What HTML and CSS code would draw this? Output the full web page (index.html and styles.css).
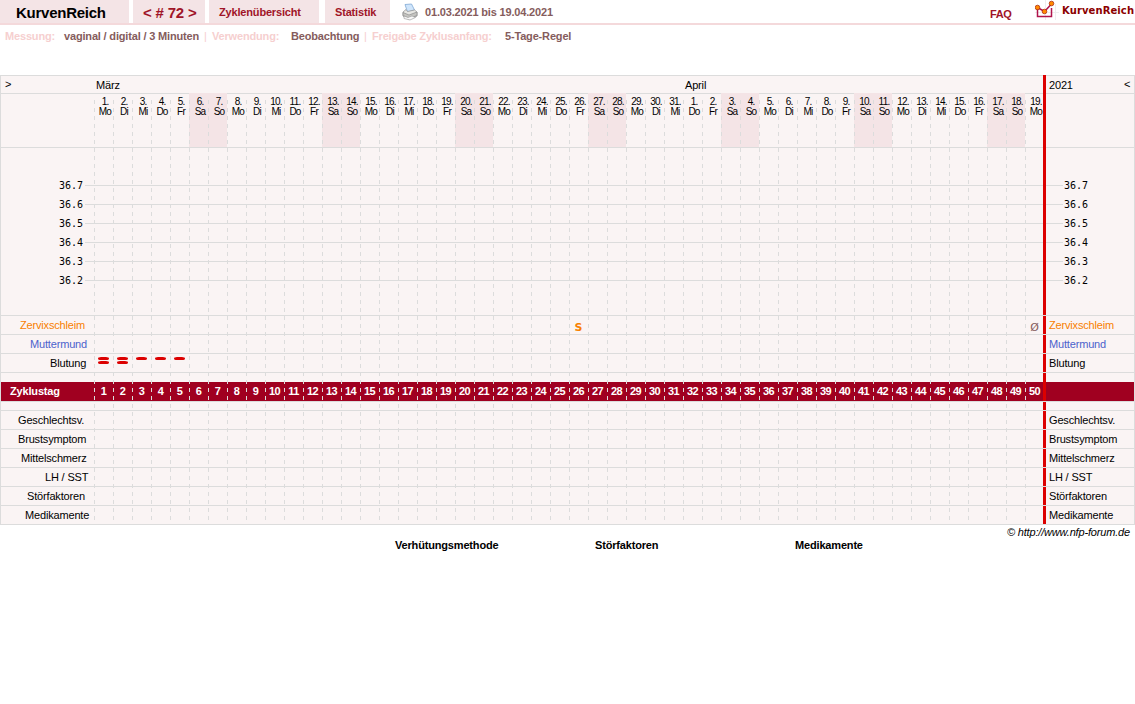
FILE: index.html
```
<!DOCTYPE html>
<html lang="de">
<head>
  <meta charset="UTF-8">
  <title>KurvenReich - Zyklus 72</title>
  <link rel="stylesheet" href="styles.css">
</head>
<body>

  <header class="topbar">
    <div class="tab brand">KurvenReich</div>
    <div class="tab nummer">&lt; # 72 &gt;</div>
    <div class="tab uebersicht">Zyklenübersicht</div>
    <div class="tab statistik">Statistik</div>
    <svg class="drucker" width="16" height="18" viewBox="0 0 16 18">
      <path d="M3 1.500 L9.500 1 L12.500 7 L5.500 9 Z" fill="#cfe5fb" stroke="#7fa8d4" stroke-width="0.8"/>
      <path d="M1 9 L4 6.500 L5.500 8.500 L12.500 7 L15 9 L15 13 L7 16.500 L1 13 Z" fill="#e6e6e2" stroke="#999" stroke-width="0.8"/>
      <path d="M1 9.500 L7 12 L15 9 L15 12.500 L7 15.500 L1 12.500 Z" fill="#c4c4c0" stroke="#8c8c8c" stroke-width="0.7"/>
      <path d="M2 13 L6 14.500 L10 13 L13.500 14.500 L8 17 L2 15.500 Z" fill="#f8f8f8" stroke="#999" stroke-width="0.6"/>
    </svg>
    <div class="zeitraum">01.03.2021 bis 19.04.2021</div>
    <div class="faq">FAQ</div>
    <svg class="logo" width="24" height="20" viewBox="0 0 24 20">
      <path d="M0 12.500 H24 M10.500 0 V20 M20.500 4 V20" stroke="#eee" fill="none"/>
      <path d="M2.500 8 V16.500 H16.500 V8" stroke="#b0144c" stroke-width="1.500" fill="none"/>
      <path d="M2.500 7.500 L9.500 11.500 L16.500 4" stroke="#b0144c" stroke-width="1.500" fill="none"/>
      <g fill="#ff8a00" stroke="#b03010" stroke-width="0.8">
        <circle cx="2.500" cy="7.500" r="2.300"/>
        <circle cx="9.500" cy="11.500" r="2.300"/>
        <circle cx="16.500" cy="3.500" r="2.300"/>
      </g>
    </svg>
    <div class="logo-text">KurvenReich</div>
  </header>

  <div class="infos">
    <span class="info-name messung">Messung:</span>
    <span class="info-wert w-messung">vaginal / digital / 3 Minuten</span>
    <span class="info-name trenner">|</span>
    <span class="info-name verwendung">Verwendung:</span>
    <span class="info-wert w-verwendung">Beobachtung</span>
    <span class="info-name trenner">|</span>
    <span class="info-name freigabe">Freigabe Zyklusanfang:</span>
    <span class="info-wert">5-Tage-Regel</span>
  </div>

  <main class="kurve">
    <div class="zeile monate">
      <span class="weiter">&gt;</span>
      <span class="monat maerz">März</span>
      <span class="monat april">April</span>
      <span class="jahr">2021</span>
      <span class="zurueck">&lt;</span>
    </div>
    <div class="zeile tage" id="tage"></div>
    <div class="zeile temperatur" id="temperatur"></div>
    <div id="oben"></div>
    <div class="zeile luecke"></div>
    <div class="zeile zyklustag" id="zyklustag"><span class="name">Zyklustag</span></div>
    <div class="zeile luecke klein"></div>
    <div id="unten"></div>
    <div class="raster"></div>
  </main>

  <div class="copyright">© http://www.nfp-forum.de</div>

  <div class="legende">
    <div>Verhütungsmethode</div>
    <div>Störfaktoren</div>
    <div>Medikamente</div>
  </div>

  <script src="kurve.js"></script>
</body>
</html>
```
FILE: styles.css
```
body {
  margin: 0;
  width: 1135px;
  min-height: 704px;
  font-family: "Liberation Sans", Arial, sans-serif;
  font-size: 11px;
  letter-spacing: -0.17px;
  color: #000;
  background-color: #fff;
}

.topbar {
  display: flex;
  height: 23px;
  border-bottom: 2px solid #f4d9db;
  font-weight: bold;
  line-height: 25px;
  white-space: nowrap;
  color: #a01428;
}

.tab {
  background-color: #f4e4e6;
  box-sizing: border-box;
  height: 23px;
}

.brand {
  width: 129px;
  margin-right: 4px;
  padding-left: 16px;
  font-size: 15px;
  letter-spacing: -0.25px;
  color: #000;
}

.nummer {
  width: 72px;
  margin-right: 4px;
  padding-left: 10px;
  font-size: 15px;
  letter-spacing: -0.2px;
}

.uebersicht {
  width: 110px;
  margin-right: 6px;
  padding-left: 10px;
}

.statistik {
  width: 65px;
  padding-left: 10px;
}

.drucker {
  margin: 3px 7px 0 12px;
}

.zeitraum {
  width: 565px;
  color: #855c5c;
}

.faq {
  width: 45px;
  line-height: 29px;
  letter-spacing: -0.4px;
}

.logo {
  flex: none;
}

.logo-text {
  padding-left: 3px;
  line-height: 22px;
  font-family: "DejaVu Sans", sans-serif;
  font-size: 10px;
  letter-spacing: 0.1px;
  color: #8b0000;
}

.infos {
  display: flex;
  height: 50px;
  padding-left: 5px;
  line-height: 23px;
  font-weight: bold;
  white-space: nowrap;
}

.info-name {
  color: #f6cfcf;
}

.info-wert {
  color: #855c5c;
}

.messung {
  width: 59px;
}

.w-messung {
  width: 140px;
}

.trenner {
  width: 8px;
  font-weight: normal;
}

.verwendung {
  width: 79px;
}

.w-verwendung {
  width: 73px;
}

.freigabe {
  width: 133px;
}

/* Kurvenblatt */

.kurve {
  position: relative;
  box-sizing: border-box;
  width: 1135px;
  height: 450px;
  border: 1px solid #dcdcdc;
  border-top: none;
  background-color: #faf4f4;
  white-space: nowrap;
}

.zeile {
  position: relative;
  display: flex;
  box-sizing: border-box;
  height: 19px;
  border-top: 1px solid #dcdcdc;
  line-height: 19px;
}

/* rote Linie am Zyklusende */
.zeile::after {
  content: "";
  position: absolute;
  z-index: 2;
  left: 1042px;
  top: 0;
  bottom: 0;
  width: 3px;
  background-color: #dc0000;
}

.monate::after,
.tage::after,
.temperatur::after {
  top: -1px;
}

.monate {
  height: 18px;
}

.weiter {
  width: 91px;
  padding-left: 4px;
  line-height: 16px;
}

.maerz {
  width: 589px;
}

.april {
  width: 364px;
}

.jahr {
  width: 75px;
}

.zurueck {
  line-height: 16px;
}

.tage {
  height: 54px;
  padding-left: 93px;
}

.tag {
  box-sizing: border-box;
  flex: none;
  width: 19px;
  height: 55px;
  margin-top: -1px;
  padding: 4px 0 0 3px;
  font-size: 10px;
  line-height: 10px;
  letter-spacing: -0.8px;
  text-align: center;
}

.wochenende {
  background-color: #f4e4e6;
}

.temperatur {
  flex-direction: column;
  height: 168px;
  padding-top: 28px;
}

.grad {
  display: flex;
  align-items: center;
  height: 19px;
  font-family: "DejaVu Sans Mono", monospace;
  font-size: 10px;
  letter-spacing: 0;
}

.grad .strich {
  width: 978px;
  height: 1px;
  margin-right: 1px;
  background-color: #dcdcdc;
}

.grad .links {
  width: 26px;
  padding-left: 58px;
}

.name {
  box-sizing: border-box;
  flex: none;
  width: 93px;
}

.feld {
  flex: none;
  width: 19px;
  text-align: center;
}

.name-rechts {
  padding-left: 5px;
}

.schleim {
  color: #f88000;
}

.muttermund {
  color: #4c62cc;
}

.wert-s,
.wert-o {
  font-family: "DejaVu Sans", sans-serif;
  font-size: 11px;
  line-height: 23px;
}

.wert-s {
  font-weight: bold;
}

.wert-o {
  color: #855c5c;
}

.blutung {
  display: flex;
  flex-direction: column;
  gap: 1px;
  padding: 3px 0 0 4px;
  box-sizing: border-box;
}

.blutung i {
  width: 11px;
  height: 3px;
  border-radius: 3px / 1.5px;
  background-color: #dc0000;
}

.luecke {
  height: 10px;
}

.klein {
  height: 9px;
}

.zyklustag {
  border-top: none;
  background-color: #a00020;
  color: #fff;
  font-weight: bold;
}

.zyklustag .name {
  padding-left: 9px;
}

.zyklustag .feld {
  letter-spacing: -0.5px;
}

/* gestrichelte Tageslinien */
.raster {
  position: absolute;
  left: 93px;
  top: 21px;
  width: 950px;
  height: 428px;
  background: repeating-linear-gradient(to right, #dcdcdc 0 1px, transparent 1px 19px);
  -webkit-mask-image: repeating-linear-gradient(to bottom, transparent 0 4px, #000 4px 8px);
  mask-image: repeating-linear-gradient(to bottom, transparent 0 4px, #000 4px 8px);
}

.copyright {
  padding-right: 5px;
  line-height: 14px;
  text-align: right;
  font-style: italic;
}

.legende {
  display: grid;
  grid-template-columns: 200px 200px 200px;
  padding-left: 395px;
  line-height: 12px;
  font-weight: bold;
}
```
FILE: kurve.js
```
const wochentage = ['Mo', 'Di', 'Mi', 'Do', 'Fr', 'Sa', 'So'];
const anzahlTage = 50;

// Zeilenname, linker Einzug, CSS-Klasse
const zeilenOben = [
  ['Zervixschleim', 19, 'schleim'],
  ['Muttermund', 29, 'muttermund'],
  ['Blutung', 49, '']
];
const zeilenUnten = [
  ['Geschlechtsv.', 17, ''],
  ['Brustsymptom', 17, ''],
  ['Mittelschmerz', 20, ''],
  ['LH / SST', 44, ''],
  ['Störfaktoren', 26, ''],
  ['Medikamente', 24, '']
];
const blutung = [2, 2, 1, 1, 1];

function feld(name, tag) {
  if (name === 'Zervixschleim' && tag === 26) return '<span class="feld wert-s">S</span>';
  if (name === 'Zervixschleim' && tag === 50) return '<span class="feld wert-o">Ø</span>';
  if (name === 'Blutung' && blutung[tag - 1]) {
    return '<span class="feld blutung">' + '<i></i>'.repeat(blutung[tag - 1]) + '</span>';
  }
  return '<span class="feld"></span>';
}

function zeichneZeilen(id, zeilen) {
  let html = '';
  zeilen.forEach(([name, einzug, klasse]) => {
    html += `<div class="zeile ${klasse}"><span class="name" style="padding-left:${einzug}px">${name}</span>`;
    for (let tag = 1; tag <= anzahlTage; tag++) {
      html += feld(name, tag);
    }
    html += `<span class="name-rechts">${name}</span></div>`;
  });
  document.getElementById(id).innerHTML = html;
}

let tage = '';
let zyklustage = '';
for (let i = 0; i < anzahlTage; i++) {
  const datum = i < 31 ? i + 1 : i - 30;
  const wochenende = i % 7 > 4 ? ' wochenende' : '';
  tage += `<div class="tag${wochenende}">${datum}.<br>${wochentage[i % 7]}</div>`;
  zyklustage += `<span class="feld">${i + 1}</span>`;
}
document.getElementById('tage').innerHTML = tage;
document.getElementById('zyklustag').innerHTML += zyklustage;

let temperatur = '';
['36.7', '36.6', '36.5', '36.4', '36.3', '36.2'].forEach(grad => {
  temperatur += `<div class="grad"><span class="links">${grad}</span><span class="strich"></span><span>${grad}</span></div>`;
});
document.getElementById('temperatur').innerHTML = temperatur;

zeichneZeilen('oben', zeilenOben);
zeichneZeilen('unten', zeilenUnten);
```
